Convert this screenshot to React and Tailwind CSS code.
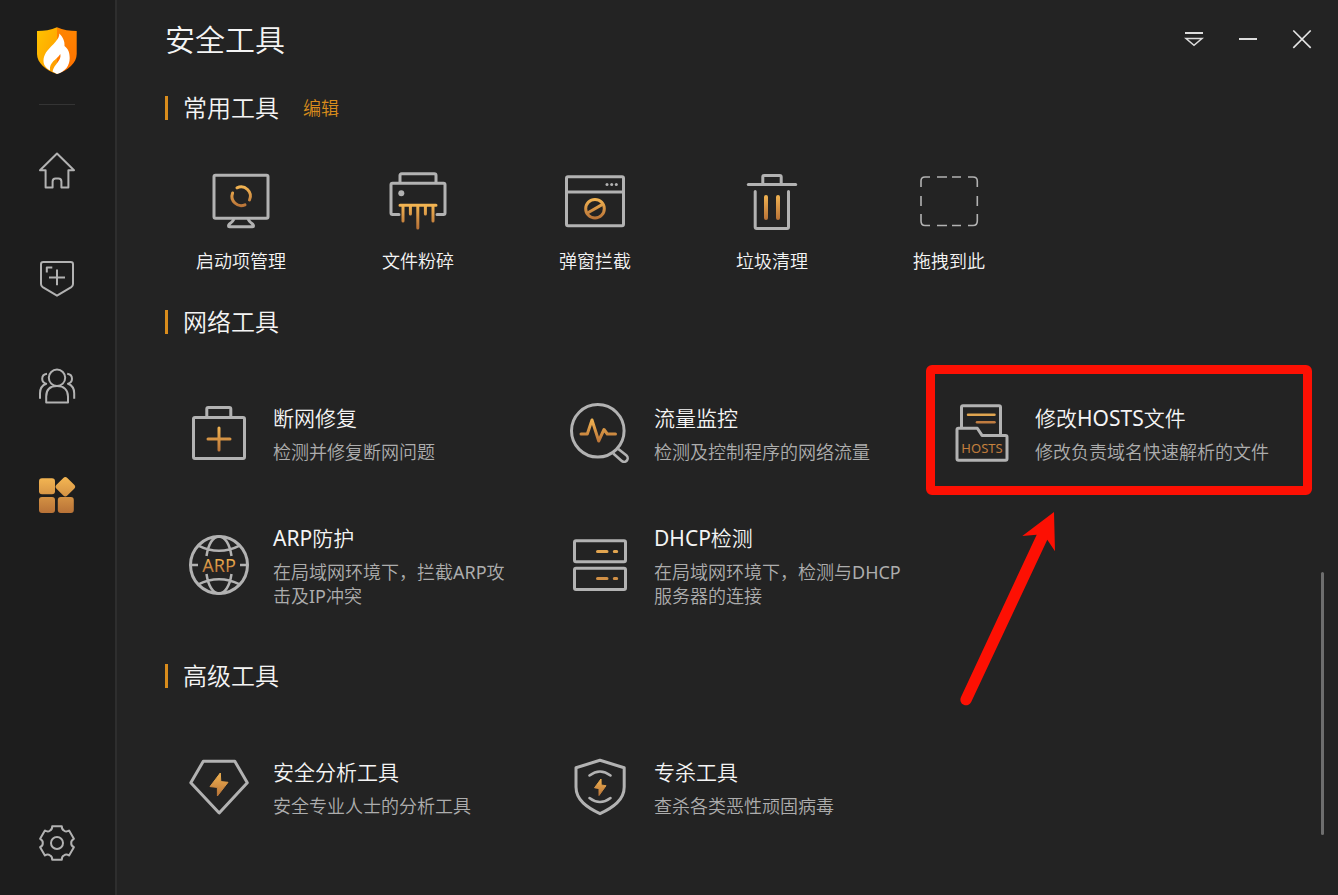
import { useId } from "react";

function Icon({ size = 60, className = "", gradient = [0, 60], children }) {
  const id = useId();
  return (
    <svg
      width={size}
      height={size}
      viewBox={`0 0 ${size} ${size}`}
      fill="none"
      stroke="#b2b2b2"
      strokeWidth={size === 60 ? 3 : 2}
      strokeLinejoin="round"
      className={`shrink-0 ${className}`}
      aria-hidden="true"
    >
      <defs>
        <linearGradient id={id} gradientUnits="userSpaceOnUse" x1="0" x2="0" y1={gradient[0]} y2={gradient[1]}>
          <stop offset="0" stopColor="#f3b552" />
          <stop offset="1" stopColor="#b87237" />
        </linearGradient>
      </defs>
      {children(`url(#${id})`)}
    </svg>
  );
}

const StartupIcon = ({ className }) => (
  <Icon className={className} gradient={[15, 36]}>
    {(g) => (
      <>
        <rect x="3" y="4.2" width="54" height="43" rx="1.5" />
        <path d="M23 48Q22 50.500 18.500 53Q16.500 55.700 18.500 55.700H41.500Q43.500 55.700 41.500 53Q38 50.500 37 48" />
        <path d="M26 16.8A9.3 9.3 0 0 1 38.5 29M34 33.8A9.3 9.3 0 0 1 21.6 22" stroke={g} strokeLinecap="round" />
      </>
    )}
  </Icon>
);

const ShredIcon = ({ className }) => (
  <Icon className={className} gradient={[34, 57]}>
    {(g) => (
      <>
        <path d="M12 12V4.5Q12 2.8 13.7 2.8H46.3Q48 2.8 48 4.5V12" />
        <path d="M11 43.5H4.5Q3 43.5 3 42V13.7Q3 12.2 4.5 12.2H55.5Q57 12.2 57 13.7V42Q57 43.5 55.5 43.5H49" strokeLinecap="round" />
        <circle cx="13.3" cy="22.3" r="3" fill="#b2b2b2" stroke="none" />
        <path d="M12 34.3H48M15 35V50M22.4 35V43M29.8 35V57M37.4 35V43M45 35V50" stroke={g} strokeLinecap="round" />
      </>
    )}
  </Icon>
);

const PopupIcon = ({ className }) => (
  <Icon className={className} gradient={[27, 48]}>
    {(g) => (
      <>
        <rect x="1.5" y="5.8" width="57" height="49" rx="1.5" />
        <path d="M1.5 21H58.5" />
        <g fill="#b2b2b2" stroke="none">
          <circle cx="42" cy="13.4" r="1.5" />
          <circle cx="46.7" cy="13.4" r="1.5" />
          <circle cx="51.3" cy="13.4" r="1.5" />
        </g>
        <g stroke={g}>
          <circle cx="30" cy="37.7" r="9.3" />
          <path d="M22.5 42 37.5 33.4" />
        </g>
      </>
    )}
  </Icon>
);

const TrashIcon = ({ className }) => (
  <Icon className={className} gradient={[23, 49]}>
    {(g) => (
      <>
        <path d="M6.3 13.4H53.7" strokeLinecap="round" />
        <path d="M20.8 12V6Q20.8 4.5 22.3 4.5H37.7Q39.2 4.5 39.2 6V12" />
        <path d="M13.2 20.5V56Q13.2 57.5 14.7 57.5H45Q46.5 57.5 46.5 56V20.5" strokeLinecap="round" />
        <path d="M24 26V47M36 26V47" stroke={g} strokeWidth="4" strokeLinecap="round" />
      </>
    )}
  </Icon>
);

const DropIcon = ({ className }) => (
  <Icon className={className}>
    {() => (
      <path
        d="M2 16V10Q2 6 6 6H11M18 6H28M33 6H42M49 6H54Q58.3 6 58.3 10V16M58.3 25V35M58.3 43V50Q58.3 54.5 54 54.5H49M42 54.5H33M28 54.5H18M11 54.5H6Q2 54.5 2 50V43M2 35V25"
        strokeWidth="1.6"
      />
    )}
  </Icon>
);

const RepairIcon = ({ className }) => (
  <Icon className={className} gradient={[23, 49]}>
    {(g) => (
      <>
        <rect x="4.5" y="14.5" width="51" height="41" rx="1.5" />
        <path d="M17.8 14V6Q17.8 4.5 19.3 4.5H40.3Q41.8 4.5 41.8 6V14" />
        <path d="M30 25V47M19 36H41" stroke={g} strokeLinecap="round" />
      </>
    )}
  </Icon>
);

const TrafficIcon = ({ className }) => (
  <Icon className={className} gradient={[15, 40]}>
    {(g) => (
      <>
        <circle cx="27.8" cy="27.8" r="26.3" />
        <path d="M48.3 46 56.6 52.6A3.6 3.6 0 0 1 51.5 57.8L43.3 50.6" strokeWidth="2.6" />
        <path d="M11 31H17.3L22 17 28.7 38 34 26.5 37.3 31H45.5" stroke={g} strokeLinecap="round" />
      </>
    )}
  </Icon>
);

const HostsIcon = ({ className }) => (
  <Icon className={className} gradient={[10, 53]}>
    {(g) => (
      <>
        <path d="M10.5 24V4.3Q10.5 2.8 12 2.8H48Q49.5 2.8 49.5 4.3V31" />
        <path d="M7.5 57.2Q6 57.2 6 55.7V26.7Q6 25.2 7.5 25.2H26.3L31 32.4H54.5Q56 32.4 56 33.9V55.7Q56 57.2 54.5 57.2Z" />
        <path d="M17 11.8H43.5" stroke="#e0a550" strokeWidth="2.5" strokeLinecap="round" />
        <path d="M26 19.2H43.5" stroke="#c07c40" strokeWidth="2.5" strokeLinecap="round" />
        <text x="31" y="49.5" textAnchor="middle" fill={g} stroke="none" fontSize="13">
          HOSTS
        </text>
      </>
    )}
  </Icon>
);

const ArpIcon = ({ className }) => (
  <Icon className={className} gradient={[23, 38]}>
    {(g) => (
      <>
        <circle cx="30" cy="30" r="28.5" />
        <path
          d="M17.5 21C19.3 9 24 1.5 30 1.5S40.7 9 42.5 21M17.5 39C19.3 51 24 58.5 30 58.5S40.7 51 42.5 39M9.3 10.7Q30 21 50.7 10.7M9.3 49.3Q30 39 50.7 49.3M1 30H9M51 30H59"
          strokeWidth="2.5"
        />
        <text x="30" y="37" textAnchor="middle" fill={g} stroke="none" fontSize="18">
          ARP
        </text>
      </>
    )}
  </Icon>
);

const DhcpIcon = ({ className }) => (
  <Icon className={className} gradient={[8, 52]}>
    {() => (
      <>
        <rect x="4.5" y="5.8" width="51" height="21" rx="1.5" />
        <rect x="4.5" y="33.2" width="51" height="21.3" rx="1.5" />
        <path d="M27.5 16.4H37M44.3 16.4H46.7" stroke="#e2a550" strokeLinecap="round" />
        <path d="M27.5 43.4H37M44.3 43.4H46.7" stroke="#d08f45" strokeLinecap="round" />
      </>
    )}
  </Icon>
);

const AnalysisIcon = ({ className }) => (
  <Icon className={className} gradient={[15, 40]}>
    {(g) => (
      <>
        <path d="M14.3 4.3H45.8L58.3 25.7 30.2 56 1.8 25.7Z" />
        <path d="M31.3 16 21 29.6 28.4 30.4V39L39 25.3 31.8 24.6Z" fill={g} stroke={g} strokeWidth="1" />
      </>
    )}
  </Icon>
);

const KillerIcon = ({ className }) => (
  <Icon className={className} gradient={[21, 39]}>
    {(g) => (
      <>
        <path d="M30 3.3 54.2 10.7V30C54.2 43 43 50.5 30 56.7C17 50.5 6 43 6 30V10.7Z" />
        <path d="M19.5 18.5Q30 10.5 40.5 18.5M19.5 41Q30 49 40.5 41" strokeLinecap="round" strokeWidth="2.6" />
        <path d="M31 22 24.5 30.8 29 31.6V38.5L36 28.7 31.2 28Z" fill={g} stroke={g} strokeWidth="1" />
      </>
    )}
  </Icon>
);

const HomeIcon = () => (
  <Icon size={40}>
    {() => (
      <path d="M20 2.5 3 19.3H8.6V36.5H15.6V30.6Q15.6 27.6 18.6 27.6H21.4Q24.4 27.6 24.4 30.6V36.5H31.4V19.3H37Z" />
    )}
  </Icon>
);

const GuardIcon = () => (
  <Icon size={40}>
    {() => (
      <>
        <path d="M6.3 3H33.7Q36 3 36 5.3V25Q36 27 34.3 28.1L20 36.7 5.7 28.1Q4 27 4 25V5.3Q4 3 6.3 3Z" />
        <path d="M9.8 13.5V8.6H15.3M20 10.5V26.3M12 18.4H28" />
      </>
    )}
  </Icon>
);

const UsersIcon = () => (
  <Icon size={40}>
    {() => (
      <>
        <circle cx="20" cy="10.8" r="8.2" />
        <path d="M9.2 35.6V29.5C9.2 22.5 13.5 19 20 19S31 22.5 31 29.5V35.6Z" />
        <path d="M10 6.8C6.8 7.2 5.2 9.3 5.2 11.8C5.2 14.3 6.6 16 9.2 16.8C5.2 18.3 3 21.6 3 26.3V31.7M30.2 6.8C33.4 7.2 35 9.3 35 11.8C35 14.3 33.6 16 31 16.8C35 18.3 37.2 21.6 37.2 26.3V31.7" />
      </>
    )}
  </Icon>
);

const ToolsIcon = () => (
  <Icon size={40} gradient={[3, 38]}>
    {(g) => (
      <g fill={g} stroke="none">
        <rect x="2" y="3.3" width="16" height="16" rx="3" />
        <path d="M26.3 2.9Q28.3 1 30.3 2.9L37.2 9.7Q39.2 11.7 37.2 13.7L30.3 20.5Q28.3 22.4 26.3 20.5L19.5 13.7Q17.5 11.7 19.5 9.7Z" />
        <rect x="2" y="22" width="16" height="16" rx="3" />
        <rect x="20.8" y="22" width="16" height="16" rx="3" />
      </g>
    )}
  </Icon>
);

const GearIcon = () => {
  const at = (deg, r) => {
    const a = (deg * Math.PI) / 180;
    return `${(20 + r * Math.sin(a)).toFixed(2)} ${(20 - r * Math.cos(a)).toFixed(2)}`;
  };
  const d = [0, 60, 120, 180, 240, 300]
    .map((a, i) => `${i ? "L" : "M"}${at(a - 16, 17.4)}L${at(a + 16, 17.4)}Q${at(a + 19, 14.2)} ${at(a + 30, 14.2)}Q${at(a + 41, 14.2)} ${at(a + 44, 17.4)}`)
    .join("");
  return (
    <Icon size={40}>
      {() => (
        <>
          <path d={d + "Z"} />
          <circle cx="20" cy="20" r="6" />
        </>
      )}
    </Icon>
  );
};

const Logo = () => (
  <svg width="40" height="48" viewBox="0 0 40 48" role="img" aria-label="安全">
    <defs>
      <linearGradient id="logo-left" x1="0" y1="0" x2="1" y2="1">
        <stop offset="0" stopColor="#ffc400" />
        <stop offset="1" stopColor="#ff9a00" />
      </linearGradient>
      <linearGradient id="logo-right" x1="0" y1="0" x2="0" y2="1">
        <stop offset="0" stopColor="#ff8500" />
        <stop offset="1" stopColor="#ff7000" />
      </linearGradient>
    </defs>
    <path d="M20 1.2C14 4 7 5 0 5V28C0 37 9 44.5 20 48Z" fill="url(#logo-left)" />
    <path d="M20 1.2C26 4 33 5 39.7 5V28C39.7 37 31 44.5 20 48Z" fill="url(#logo-right)" />
    <path
      d="M22.3 7.5C23 13 15 19 10.5 24.5C6 30 5.5 36 8 40C9.5 42.3 11.5 43.6 13 44.3C12 36 20 33.5 23.3 28C25 34.5 17 38 15.5 45.6L20 48C28.5 45.5 32.7 39.5 32.7 32C32.7 27 31.5 23 27.5 20C28 15 25.5 10.5 22.3 7.5Z"
      fill="#fff"
    />
  </svg>
);

const commonTools = [
  { name: "启动项管理", icon: StartupIcon },
  { name: "文件粉碎", icon: ShredIcon },
  { name: "弹窗拦截", icon: PopupIcon },
  { name: "垃圾清理", icon: TrashIcon },
  { name: "拖拽到此", icon: DropIcon },
];

const networkTools = [
  { name: "断网修复", desc: "检测并修复断网问题", icon: RepairIcon },
  { name: "流量监控", desc: "检测及控制程序的网络流量", icon: TrafficIcon },
  { name: "修改HOSTS文件", desc: "修改负责域名快速解析的文件", icon: HostsIcon, marked: true },
  { name: "ARP防护", desc: "在局域网环境下，拦截ARP攻击及IP冲突", icon: ArpIcon },
  { name: "DHCP检测", desc: "在局域网环境下，检测与DHCP服务器的连接", icon: DhcpIcon },
];

const advancedTools = [
  { name: "安全分析工具", desc: "安全专业人士的分析工具", icon: AnalysisIcon },
  { name: "专杀工具", desc: "查杀各类恶性顽固病毒", icon: KillerIcon },
];

const navItems = [
  { label: "首页", icon: HomeIcon },
  { label: "防护中心", icon: GuardIcon },
  { label: "访问控制", icon: UsersIcon },
  { label: "安全工具", icon: ToolsIcon, current: true },
];

function SectionHeader({ title, children }) {
  return (
    <div className="flex h-6 items-center">
      <span className="h-6 w-[3px] bg-[#d98c1c]" />
      <h2 className="ml-[15px] text-2xl leading-6 text-[#f4f4f4]">{title}</h2>
      {children}
    </div>
  );
}

function Marker() {
  return (
    <div className="pointer-events-none">
      <div className="absolute -top-[38px] -right-1 -bottom-[31px] -left-px rounded-md border-[9px] border-[#fd1003]" />
      <svg width="120" height="210" viewBox="0 0 120 210" className="absolute top-[102px] left-6" aria-hidden="true">
        <path d="M103 7 71.3 31 85.7 29.7 9.9 192.3A5.6 5.6 0 0 0 20.2 197L96.3 34.7 104 46.3Z" fill="#fd1003" />
      </svg>
    </div>
  );
}

function ToolGrid({ tools }) {
  return (
    <ul className="mt-[69px] grid grid-cols-3 gap-y-[59px] pr-[30px]">
      {tools.map(({ name, desc, icon: ToolIcon, marked }) => (
        <li key={name} className="relative">
          <button type="button" className="flex w-full items-center gap-6 pr-[25px] pl-6 text-left">
            <ToolIcon className="mb-px" />
            <span className="flex min-w-0 flex-col gap-[7px]">
              <span className="text-[21px] leading-[30px] text-[#f4f4f4]">{name}</span>
              <span className="text-lg leading-6 text-[#adadad]">{desc}</span>
            </span>
          </button>
          {marked && <Marker />}
        </li>
      ))}
    </ul>
  );
}

export default function App() {
  return (
    <div
      className="flex min-h-screen bg-[#232323] font-['Noto_Sans','Noto_Sans_CJK_SC_DemiLight','Noto_Sans_CJK_SC',sans-serif] font-normal"
      lang="zh-CN"
    >
      <aside className="flex w-[115px] shrink-0 flex-col items-center bg-[#1d1d1d] pt-[26px] pr-px pb-8">
        <Logo />
        <hr className="mt-[30px] w-9 border-[#343434]" />
        <nav className="mt-[46px] flex flex-col gap-[68px]">
          {navItems.map(({ label, icon: NavIcon, current }) => (
            <button key={label} type="button" aria-label={label} aria-current={current ? "page" : undefined}>
              <NavIcon />
            </button>
          ))}
        </nav>
        <button type="button" aria-label="设置" className="mt-auto">
          <GearIcon />
        </button>
      </aside>

      <main className="relative min-w-0 flex-1 border-l-2 border-[#2e2e2e] pl-12">
        <header className="flex h-20 items-center justify-between pr-[9px]">
          <h1 className="text-3xl text-[#f4f4f4]">安全工具</h1>
          <div className="flex">
            <button type="button" aria-label="菜单" className="flex h-12 w-[54px] items-center justify-center">
              <svg width="20" height="20" viewBox="0 0 20 20" fill="none" stroke="#dcdcdc" aria-hidden="true">
                <path d="M1 3H19" strokeWidth="2" />
                <path d="M2 8.5H18L10 15.3Z" strokeWidth="1.5" />
              </svg>
            </button>
            <button type="button" aria-label="最小化" className="flex h-12 w-[54px] items-center justify-center">
              <svg width="20" height="20" viewBox="0 0 20 20" fill="none" stroke="#dcdcdc" aria-hidden="true">
                <path d="M1 9H19" strokeWidth="2" />
              </svg>
            </button>
            <button type="button" aria-label="关闭" className="flex h-12 w-[54px] items-center justify-center">
              <svg width="20" height="20" viewBox="0 0 20 20" fill="none" stroke="#e4e4e4" aria-hidden="true">
                <path d="M1.3 0.5 18.7 17.9M18.7 0.5 1.3 17.9" strokeWidth="1.6" />
              </svg>
            </button>
          </div>
        </header>

        <section className="pt-4">
          <SectionHeader title="常用工具">
            <button type="button" className="ml-6 text-lg leading-6 text-[#d98c1c]">
              编辑
            </button>
          </SectionHeader>
          <ul className="mt-[51px] flex gap-[81px] pl-7">
            {commonTools.map(({ name, icon: ToolIcon }) => (
              <li key={name}>
                <button type="button" className="flex w-24 flex-col items-center gap-[18px] text-lg leading-6 text-[#f4f4f4]">
                  <ToolIcon />
                  {name}
                </button>
              </li>
            ))}
          </ul>
        </section>

        <section className="mt-[37px]">
          <SectionHeader title="网络工具" />
          <ToolGrid tools={networkTools} />
        </section>

        <section className="mt-14">
          <SectionHeader title="高级工具" />
          <ToolGrid tools={advancedTools} />
        </section>

        <div className="absolute right-[14px] bottom-[60px] h-[263px] w-[3px] rounded-full bg-[#6e6e6e]" />
      </main>
    </div>
  );
}
